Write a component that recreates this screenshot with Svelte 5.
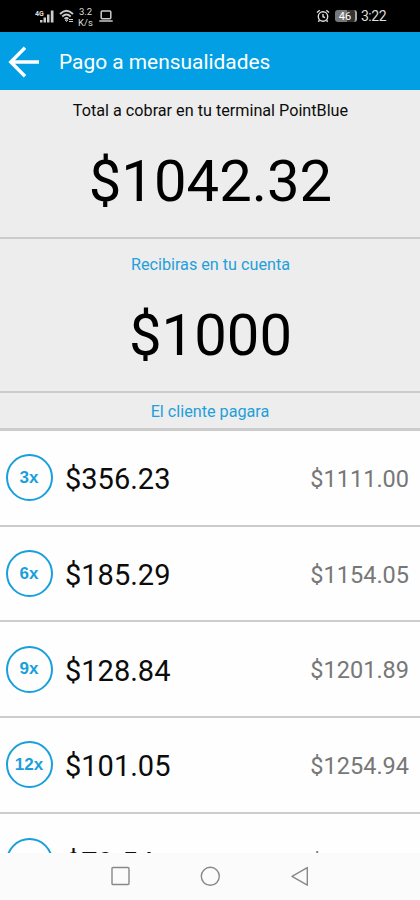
<script>
  const total = '$1042.32';
  const received = '$1000';

  const plans = [
    { months: 3, payment: '$356.23', total: '$1111.00' },
    { months: 6, payment: '$185.29', total: '$1154.05' },
    { months: 9, payment: '$128.84', total: '$1201.89' },
    { months: 12, payment: '$101.05', total: '$1254.94' },
    { months: 18, payment: '$79.54', total: '$1431.72' }
  ];
</script>

<div class="screen">
  <div class="status">
    <div class="status-left">
      <svg class="signal" width="20" height="15" viewBox="0 0 20 15">
        <text x="0" y="6.500" font-size="7" font-weight="700" fill="#ddd">4G</text>
        <path d="M5 13.500V11h2.500v2.500zM8.500 13.500V8.500H11v5zM12 13.500V5.500h2.500v8zM15.800 13.500V1.500h2.700v12z" fill="#ccc" />
      </svg>
      <svg class="wifi" width="16" height="14" viewBox="0 0 16 14" fill="none" stroke="#ccc" stroke-width="1.800">
        <path d="M1 5Q7.500-1.500 14 5M3.300 7.500Q7.500 3.500 11.700 7.500M5.600 9.900Q7.500 8 9.400 9.900" />
        <path d="M6.300 11h2.400l-1.200 1.500zM10 10.500h4M10 12.500h4" stroke-width="1" />
      </svg>
      <div class="speed"><span>3.2</span><span>K/s</span></div>
      <svg class="laptop" width="14" height="12" viewBox="0 0 14 12" fill="none" stroke="#ccc" stroke-width="1.500">
        <rect x="2.200" y="1" width="9.600" height="7.800" rx="1" />
        <path d="M.3 11h13.400" />
      </svg>
    </div>
    <div class="status-right">
      <svg width="14" height="14" viewBox="0 0 14 14" fill="none" stroke="#ddd" stroke-width="1.400">
        <circle cx="7" cy="7.500" r="4.700" />
        <path d="M1 3.500 3.700 1.200M13 3.500 10.300 1.200M7 5v2.700l2 1M3.500 11.300 2.300 12.800M10.500 11.300l1.200 1.500" />
      </svg>
      <div class="battery"><span>46</span></div>
      <span class="clock">3:22</span>
    </div>
  </div>

  <header>
    <svg width="32" height="32" viewBox="0 0 32 32" fill="none" stroke="#fff" stroke-width="3.400">
      <path d="M31 16H3M17 1.800 2.800 16 17 30.200" />
    </svg>
    <h1>Pago a mensualidades</h1>
  </header>

  <section class="charge">
    <p>Total a cobrar en tu terminal PointBlue</p>
    <div class="amount">{total}</div>
  </section>

  <section class="receive">
    <p class="blue">Recibiras en tu cuenta</p>
    <div class="amount">{received}</div>
  </section>

  <div class="list-title blue">El cliente pagara</div>

  <div class="plans">
    {#each plans as plan}
      <div class="plan">
        <div class="badge">{plan.months}x</div>
        <div class="payment">{plan.payment}</div>
        <div class="plan-total">{plan.total}</div>
      </div>
    {/each}
  </div>

  <nav>
    <svg width="20" height="20" viewBox="0 0 20 20"><rect x="2" y="1.500" width="17" height="17" rx="1" /></svg>
    <svg width="20" height="20" viewBox="0 0 20 20"><circle cx="10.300" cy="10.300" r="9" /></svg>
    <svg width="20" height="20" viewBox="0 0 20 20"><path d="M17.300 1.600v17.600L2 10.400z" /></svg>
  </nav>
</div>

<style>
  .screen {
    display: flex;
    flex-direction: column;
    width: 420px;
    height: 900px;
    overflow: hidden;
    background: #fefefe;
    color: #0c0c0c;
    font-family: Roboto, "Liberation Sans", sans-serif;
  }
  .screen > * {
    box-sizing: border-box;
    flex-shrink: 0;
  }
  .status {
    display: flex;
    justify-content: space-between;
    height: 32px;
    padding: 0 34px 0 35px;
    background: #000;
    color: #ddd;
  }
  .status-left,
  .status-right {
    display: flex;
    align-items: center;
  }
  .wifi {
    margin-left: 4px;
  }
  .speed {
    display: flex;
    flex-direction: column;
    width: 15px;
    margin: 1px 0 0 3px;
    font-size: 9.5px;
    line-height: 11px;
    text-align: center;
  }
  .laptop {
    margin-left: 6px;
  }
  .battery {
    display: flex;
    align-items: center;
    justify-content: center;
    width: 20px;
    height: 12px;
    margin-left: 5px;
    border-right: 2px solid #aaa;
    border-radius: 3px;
    background: linear-gradient(90deg, #777 60%, #333 60%);
    color: #fff;
    font-size: 11px;
  }
  .clock {
    margin-left: 4px;
    font-size: 14px;
    letter-spacing: -0.5px;
  }
  header {
    display: flex;
    align-items: center;
    height: 58px;
    padding: 1px 8px 0;
    background: #029fe4;
    color: #fff;
  }
  h1 {
    margin: 1px 0 0 19px;
    font-size: 20.9px;
    font-weight: 400;
    white-space: nowrap;
  }
  section {
    display: flex;
    flex-direction: column;
    align-items: center;
    border-bottom: 2px solid #ccc;
    background: #ededed;
  }
  section p {
    margin: 0 0 0 1px;
    font-size: 16.2px;
    line-height: 20px;
    white-space: nowrap;
  }
  .charge {
    height: 149px;
    padding-top: 11px;
  }
  .receive {
    height: 154px;
    padding-top: 16px;
  }
  .amount {
    margin: 25px 0 0 1px;
    font-size: 58px;
    line-height: 70px;
    color: #000;
  }
  .blue {
    color: #239fda;
  }
  .list-title {
    height: 38px;
    border-bottom: 3px solid #ccc;
    background: #ededed;
    font-size: 16.2px;
    line-height: 38px;
    text-align: center;
  }
  .plans {
    height: 422px;
    overflow: hidden;
  }
  .plan {
    display: flex;
    align-items: center;
    box-sizing: border-box;
    height: 95.7px;
    padding: 0 11px 0 6px;
    border-bottom: 2px solid #ccc;
  }
  .plan:last-child {
    height: 97.5px;
  }
  .badge {
    display: flex;
    align-items: center;
    justify-content: center;
    box-sizing: border-box;
    width: 47px;
    height: 47px;
    padding-right: 1px;
    border: 2px solid #199fdc;
    border-radius: 50%;
    color: #199fdc;
    font: bold 17px "Liberation Sans", sans-serif;
  }
  .payment {
    margin-left: 12px;
    padding-top: 3px;
    font-size: 29px;
  }
  .plan-total {
    margin-left: auto;
    padding-top: 2px;
    color: #777;
    font-size: 23.5px;
  }
  nav {
    display: flex;
    align-items: center;
    justify-content: center;
    gap: 70px;
    height: 47px;
    padding-bottom: 1px;
    background: #fbfbfb;
  }
  nav svg {
    fill: none;
    stroke: #888;
    stroke-width: 1.4;
    stroke-linejoin: round;
  }
</style>
